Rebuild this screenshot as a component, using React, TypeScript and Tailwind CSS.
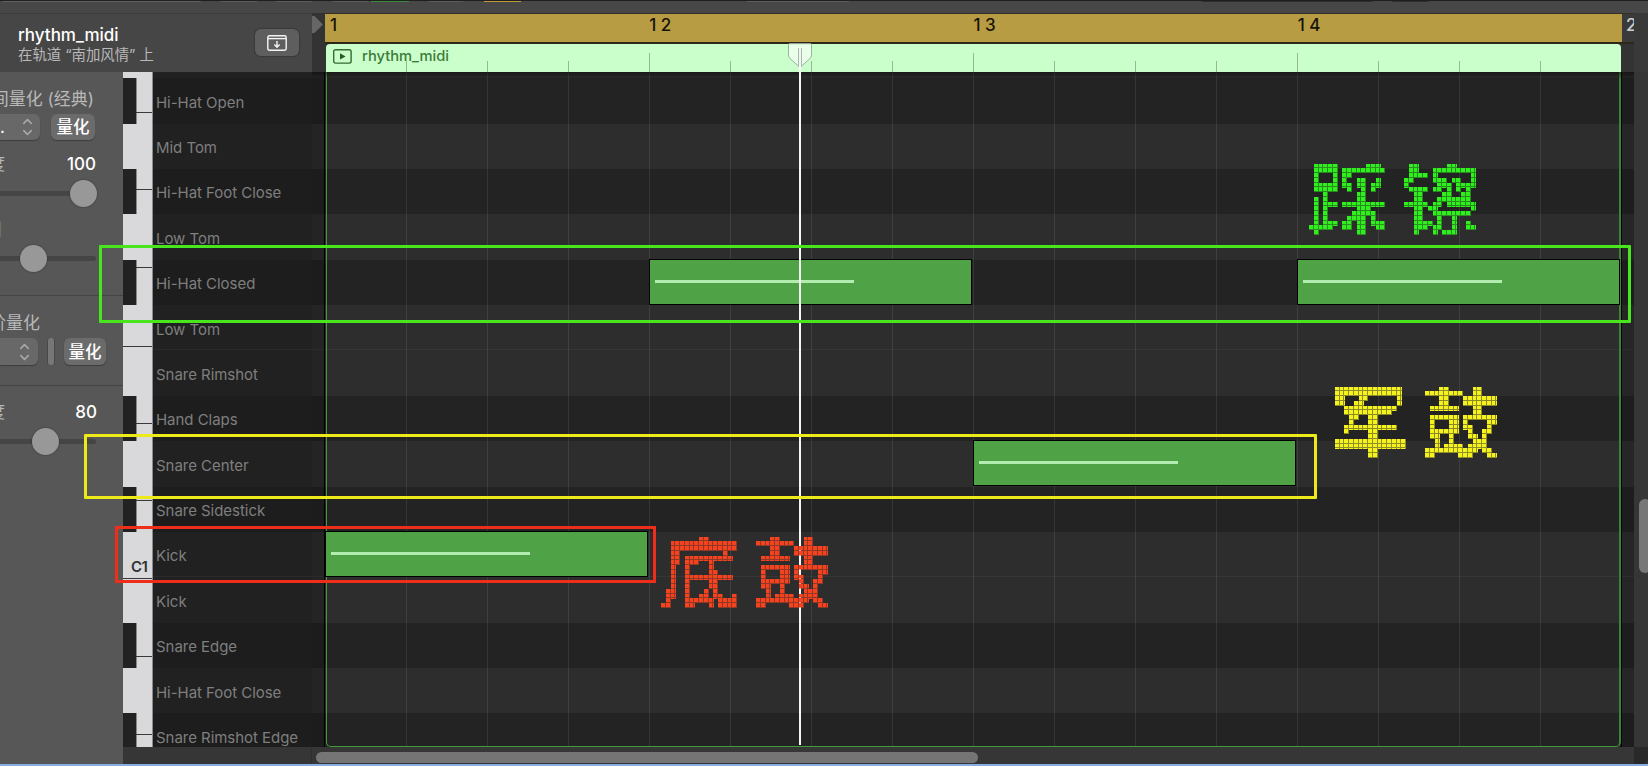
import { clsx } from 'clsx';
import { ChevronDown, ChevronUp } from 'lucide-react';

type Row = { name: string; black?: boolean; octave?: string; divider?: boolean };

const rows: Row[] = [
  { name: 'Hi-Hat Open', black: true },
  { name: 'Mid Tom' },
  { name: 'Hi-Hat Foot Close', black: true },
  { name: 'Low Tom' },
  { name: 'Hi-Hat Closed', black: true },
  { name: 'Low Tom', divider: true },
  { name: 'Snare Rimshot' },
  { name: 'Hand Claps', black: true },
  { name: 'Snare Center' },
  { name: 'Snare Sidestick', black: true },
  { name: 'Kick', octave: 'C1', divider: true },
  { name: 'Kick' },
  { name: 'Snare Edge', black: true },
  { name: 'Hi-Hat Foot Close' },
  { name: 'Snare Rimshot Edge', black: true },
];

// white key separators, measured from the top of the keyboard
const keyLines = [
  { top: 40 },
  { top: 117 },
  { top: 195 },
  { top: 274, full: true },
  { top: 351 },
  { top: 428 },
  { top: 506, full: true },
  { top: 584 },
  { top: 662 },
];

const beats = ['1', '1 2', '1 3', '1 4'];

const notes = [
  { beat: 0, row: 10 },
  { beat: 1, row: 4 },
  { beat: 2, row: 8 },
  { beat: 3, row: 4 },
];

function TopStrip() {
  return (
    <div className="relative h-[13px] shrink-0 overflow-hidden border-t border-[#1f1f1f] bg-[#474747]">
      <div className="absolute -top-[5px] left-0 h-[6px] w-[203px] rounded-b border border-[#626262] bg-[#555]" />
      <div className="absolute -top-[5px] left-[218px] h-[6px] w-[42px] rounded-b border border-[#5c5c5c]" />
      <div className="absolute -top-[5px] left-[273px] h-[6px] w-[42px] rounded-b border border-[#5c5c5c]" />
      <div className="absolute -top-[5px] left-[330px] h-[6px] w-[41px] rounded-b border border-[#5c5c5c]" />
      <div className="absolute top-0 left-[371px] h-px w-[38px] bg-[#3f8a3a]" />
      <div className="absolute -top-[5px] left-[426px] h-[6px] w-[40px] rounded-b border border-[#5c5c5c]" />
      <div className="absolute top-0 left-[484px] h-px w-[37px] bg-[#c29a3e]" />
      <div className="absolute -top-[5px] left-[744px] h-[6px] w-[108px] rounded-b border border-[#5c5c5c]" />
      <div className="absolute -top-[5px] left-[1200px] h-[6px] w-[174px] rounded-b bg-[#2d2d2d]" />
      <div className="absolute -top-[5px] left-[1390px] h-[6px] w-[40px] rounded-b bg-[#2d2d2d]" />
    </div>
  );
}

function Header() {
  return (
    <div className="flex h-[59px] shrink-0">
      <div className="flex w-[312px] items-start justify-between border-t border-[#3d3d3d] bg-[#464646] pl-[18px] pr-[13px]">
        <div className="pt-[11px]">
          <div className="text-[17px] leading-[20px] font-medium text-white">rhythm_midi</div>
          <div className="mt-px font-['Inter','Noto_Sans_CJK_SC',sans-serif] text-[14.4px] leading-[17px] whitespace-nowrap text-[#b9b9b9]">
            在轨道 “南加风情” 上
          </div>
        </div>
        <div className="mt-[15px] flex h-[27px] w-[44px] items-center justify-center rounded-md bg-[#5e5e5e] shadow-[0_0_1px_1px_rgba(0,0,0,0.18)]">
          <svg width="20" height="16" viewBox="0 0 20 16" fill="none" stroke="#f5f5f5" strokeWidth="1.4">
            <rect x="0.8" y="0.8" width="18.4" height="14.4" rx="1.6" />
            <path d="M1 3.6h18" />
            <path d="M10 6v6M7.3 9.6L10 12.2l2.7-2.6" />
          </svg>
        </div>
      </div>
      <div className="w-[13px] bg-[#333] pt-[3px]">
        <svg width="12" height="18" viewBox="0 0 12 18" fill="#666">
          <path d="M0 0h2.5L11 8.5L2.5 17H0z" />
        </svg>
      </div>
      <div className="flex w-[1309px] flex-col bg-[#333]">
        <div className="flex h-[29px] border-t border-[#363024]">
          <div className="grid w-[1297px] grid-cols-4 bg-[#b89c43]">
            {beats.map((b, i) => (
              <div
                key={b}
                className={clsx('text-[17px] leading-[22px] font-medium tracking-[-0.1px] text-[#171307]', i === 0 && 'pl-[5px]')}
              >
                {b}
              </div>
            ))}
          </div>
          <div className="w-[12px] overflow-hidden bg-[#3a3a3a] pl-[4px] text-[17px] leading-[22px] font-medium text-[#cfcfcf]">
            2
          </div>
        </div>
        <div className="h-[2px] bg-[#2c2819]" />
        <div className="relative mr-[13px] ml-px flex h-[28px] rounded-t bg-[#caffcc]">
          <div className="absolute inset-0">
            {Array.from({ length: 15 }, (_, i) => i + 1).map((i) => (
              <div
                key={i}
                className={clsx('absolute bottom-0 w-px bg-[#93b995]', i % 4 === 0 ? 'h-[19px]' : 'h-[11px]')}
                style={{ left: i * 81 - 1 }}
              />
            ))}
          </div>
          <svg className="mt-[5px] ml-[7px]" width="19" height="15" viewBox="0 0 19 15" fill="none">
            <rect x="0.7" y="0.7" width="17.4" height="13.4" rx="1.8" stroke="#336b30" strokeWidth="1.4" />
            <path d="M7 4.2v6.4l5.6-3.2z" fill="#285c25" />
          </svg>
          <span className="ml-[10px] text-[14.7px] leading-[25px] font-medium text-[#3c7a37]">rhythm_midi</span>
        </div>
      </div>
      <div className="w-[14px] bg-[#393939]" />
    </div>
  );
}

function Slider({ value, end = true }: { value: number; end?: boolean }) {
  return (
    <div className="relative h-[27px]">
      <div className={clsx('absolute top-[11px] left-0 h-[5px] rounded-r-full bg-[#454545]', end ? 'w-[96px]' : 'w-[80px]')} />
      <div
        className="absolute top-0 h-[27px] w-[27px] rounded-full bg-[#989898] shadow-[0_0_2px_rgba(0,0,0,0.4)]"
        style={{ left: value }}
      />
    </div>
  );
}

function Stepper() {
  return (
    <div className="flex flex-col text-[#a9a9a9]">
      <ChevronUp size={15} strokeWidth={2.4} className="-mb-[4px]" />
      <ChevronDown size={15} strokeWidth={2.4} />
    </div>
  );
}

function Inspector() {
  return (
    <div className="w-[123px] shrink-0 overflow-hidden bg-[#575757] text-[17px]">
      <div className="flex h-[42px] w-[94px] items-end justify-end leading-[29px] whitespace-nowrap text-[#b9b9b9]">
        时间量化 (经典)
      </div>
      <div className="flex h-[26px] gap-[11px]">
        <div className="flex w-[40px] items-center justify-between rounded-r-md bg-[#686868] pr-[5px] text-white shadow-[0_1px_1px_rgba(0,0,0,0.3)]">
          <span className="w-[10px] leading-none">.</span>
          <Stepper />
        </div>
        <div className="flex w-[44px] items-center justify-center rounded-md bg-[#6b6b6b] pt-px text-[16.5px] font-medium text-white shadow-[0_1px_1px_rgba(0,0,0,0.3)]">
          量化
        </div>
      </div>
      <div className="mt-[10px] flex h-[28px] w-[96px] items-center justify-between pt-[2px]">
        <span className="-ml-[12px] text-[#b9b9b9]">度</span>
        <span className="text-[17px] font-medium text-white">100</span>
      </div>
      <div className="mt-[2px]">
        <Slider value={69.5} end={false} />
      </div>
      <div className="mt-[10px] h-[28px]">
        <span className="-ml-[15px] text-[#777]">围</span>
      </div>
      <Slider value={20} />
      <div className="mt-[23px] h-px bg-[#444]" />
      <div className="mt-[13px] -ml-[46px] flex h-[29px] w-[86px] items-center justify-end whitespace-nowrap text-[#b9b9b9]">高阶量化</div>
      <div className="flex h-[27px]">
        <div className="flex w-[38px] items-center justify-end rounded-r-md bg-[#686868] pr-[6px] shadow-[0_1px_1px_rgba(0,0,0,0.3)]">
          <Stepper />
        </div>
        <div className="ml-[9px] w-[8px] rounded-[3px] border-x border-[#484848] bg-[#777]" />
        <div className="ml-[9px] flex w-[42px] items-center justify-center rounded-md bg-[#6b6b6b] pt-px text-[16.5px] font-medium text-white shadow-[0_1px_1px_rgba(0,0,0,0.3)]">
          量化
        </div>
      </div>
      <div className="mt-[20px] h-px bg-[#444]" />
      <div className="mt-[12px] flex h-[28px] w-[97px] items-center justify-between pt-[2px]">
        <span className="-ml-[12px] text-[#b9b9b9]">度</span>
        <span className="text-[17px] font-medium text-white">80</span>
      </div>
      <div className="mt-[2px]">
        <Slider value={32} />
      </div>
    </div>
  );
}

function Keyboard() {
  return (
    <div className="relative flex h-[675px] w-[30px] shrink-0 flex-col overflow-hidden border-r border-[#8c8c8e] bg-[#d9d9dc] pt-[6.2px]">
      {rows.map((row, i) => (
        <div key={i} className="flex h-[45.38px] shrink-0 items-end">
          {row.black && <div className="h-full w-[14px] border-r border-[#888] bg-[#222]" />}
          {row.octave && (
            <span className="ml-[8px] text-[15px] leading-[20px] font-semibold tracking-[-0.5px] text-[#333]">{row.octave}</span>
          )}
        </div>
      ))}
      {keyLines.map((line) => (
        <div
          key={line.top}
          className={clsx('absolute right-0 h-px bg-[#39393b]', line.full ? 'w-full' : 'w-[16px]')}
          style={{ top: line.top }}
        />
      ))}
    </div>
  );
}

function Labels() {
  return (
    <div className="flex h-[675px] w-[159px] shrink-0 flex-col overflow-hidden bg-[#212121] pt-[6.2px]">
      {rows.map((row, i) => (
        <div
          key={i}
          className={clsx(
            'flex h-[45.38px] shrink-0 items-center border-b pt-[5px] pl-[3px] text-[15px] tracking-[-0.04px] whitespace-nowrap text-[#7f7f7f]',
            row.black ? 'border-[#1d1d1d] bg-[#1d1d1d]' : 'bg-[#212121]',
            !row.black && (row.divider ? 'border-[#2b2b2b]' : 'border-[#212121]'),
          )}
        >
          {row.name}
        </div>
      ))}
    </div>
  );
}

function PianoRoll() {
  return (
    <div className="relative flex h-[675px] w-[1322px] shrink-0 flex-col overflow-hidden bg-[#2d2d2d] pt-[6.2px]">
      {rows.map((row, i) => (
        <div
          key={i}
          className={clsx(
            'h-[45.38px] shrink-0 border-b',
            row.black ? 'border-[#232323] bg-[#232323]' : 'bg-[#2d2d2d]',
            !row.black && (row.divider ? 'border-[#363636]' : 'border-[#2d2d2d]'),
          )}
        />
      ))}
      <div className="absolute inset-y-0 left-0 w-[13px] border-r border-black bg-black/20" />
      <div className="absolute inset-y-0 right-0 w-[12px] bg-black/15" />
      {Array.from({ length: 15 }, (_, i) => i + 1).map((i) => (
        <div key={i} className="absolute inset-y-0 w-px bg-white/9" style={{ left: 13 + i * 81 }} />
      ))}
      <div className="absolute top-0 bottom-0 left-[14px] w-[1295px] rounded-b-[5px] border-x border-b border-[#3f9d38] border-r-2 border-r-[#3c8238]" />
      <div className="absolute inset-y-0 left-[1309px] w-px bg-black" />
      {notes.map((n) => (
        <div
          key={n.beat}
          className="absolute h-[46px] w-[323px] border border-black bg-[#4fa245] pt-[20px] pl-[5px]"
          style={{ left: 13 + n.beat * 324, top: 5.4 + n.row * 45.34 }}
        >
          <div className="h-[3px] w-[199px] bg-[#b2ecae]" />
        </div>
      ))}
      <div className="absolute inset-x-0 top-0 h-[7px] bg-gradient-to-b from-black/45 to-transparent" />
    </div>
  );
}

function Playhead() {
  return (
    <div className="absolute top-[43px] left-[787px] w-[26px]">
      <svg width="26" height="26" viewBox="0 0 26 26">
        <path
          d="M1.500 1.500Q1.500 .7 2.500 .7H23.500Q24.500 .7 24.500 1.500V12Q24.500 14 23 15.500L13 24.500L3 15.500Q1.500 14 1.500 12Z"
          fill="#e9ffea"
          stroke="#98b699"
        />
        <path d="M11.500 5v18M14.500 5v18" stroke="#a9bbaa" />
      </svg>
      <div className="absolute top-[5px] left-[12px] h-[697px] w-[2px] bg-[#f5f5f5]" />
    </div>
  );
}

const cellCenters = [2, 7, 12, 16];
const cellGaps = [4, 9, 13, 18];

// one row/column of thin lines repeated every 19px, four cells to a tile
function LineTile({ name, offsets }: { name: string; offsets: number[] }) {
  return (
    <>
      {offsets.map((o, i) => (
        <feFlood key={`v${o}`} x={o} y="0" width="1" height="19" floodColor="#000" result={`${name}V${i}`} />
      ))}
      <feMerge x="0" y="0" width="19" height="19" result={`${name}VAll`}>
        {offsets.map((o, i) => (
          <feMergeNode key={o} in={`${name}V${i}`} />
        ))}
      </feMerge>
      <feTile in={`${name}VAll`} x="0" y="0" width="220" height="100" result={`${name}V`} />
      {offsets.map((o, i) => (
        <feFlood key={`h${o}`} x="0" y={o} width="19" height="1" floodColor="#000" result={`${name}H${i}`} />
      ))}
      <feMerge x="0" y="0" width="19" height="19" result={`${name}HAll`}>
        {offsets.map((o, i) => (
          <feMergeNode key={o} in={`${name}H${i}`} />
        ))}
      </feMerge>
      <feTile in={`${name}HAll`} x="0" y="0" width="220" height="100" result={`${name}H`} />
    </>
  );
}

// turns the marker lettering into square cells
function CellFilter() {
  return (
    <svg className="absolute h-0 w-0" aria-hidden="true">
      <filter id="cells" filterUnits="userSpaceOnUse" primitiveUnits="userSpaceOnUse" x="0" y="0" width="220" height="100" colorInterpolationFilters="sRGB">
        <LineTile name="dot" offsets={cellCenters} />
        <feComposite in="dotV" in2="dotH" operator="in" x="0" y="0" width="220" height="100" result="dots" />
        <feComponentTransfer in="SourceGraphic" result="solid">
          <feFuncA type="discrete" tableValues="0 1" />
        </feComponentTransfer>
        <feComposite in="solid" in2="dots" operator="in" />
        <feMorphology operator="dilate" radius="2" result="blocks" />
        <LineTile name="gap" offsets={cellGaps} />
        <feMerge x="0" y="0" width="220" height="100" result="gapLines">
          <feMergeNode in="gapV" />
          <feMergeNode in="gapH" />
        </feMerge>
        <feComposite in="blocks" in2="gapLines" operator="out" result="tiles" />
        <feComponentTransfer in="blocks" result="faded">
          <feFuncA type="linear" slope="0.5" />
        </feComponentTransfer>
        <feMerge>
          <feMergeNode in="faded" />
          <feMergeNode in="tiles" />
        </feMerge>
      </filter>
    </svg>
  );
}

function Marker({ text, className }: { text: string; className: string }) {
  return (
    <div
      className={clsx(
        "absolute h-[100px] w-[220px] font-['Noto_Sans_CJK_SC',sans-serif] text-[79px] leading-[84px] font-medium tracking-[13px] whitespace-nowrap [filter:url(#cells)]",
        className,
      )}
    >
      {text}
    </div>
  );
}

export default function App() {
  return (
    <div className="relative flex h-[766px] w-[1648px] flex-col overflow-hidden bg-[#575757] font-['Inter','Noto_Sans_CJK_SC',sans-serif]">
      <TopStrip />
      <Header />
      <div className="flex h-[692px] shrink-0">
        <Inspector />
        <div className="flex w-[1525px] flex-col">
          <div className="flex h-[675px]">
            <Keyboard />
            <Labels />
            <PianoRoll />
            <div className="flex-1 overflow-hidden bg-[#363636] pt-[427px] pl-[5px]">
              <div className="h-[74px] w-[12px] rounded-full bg-[#777]" />
            </div>
          </div>
          <div className="flex h-[17px] bg-[#363636]">
            <div className="w-[189px] border-r border-[#2e2e2e]" />
            <div className="mt-[5px] ml-[4px] h-[11px] w-[662px] rounded-full bg-[#757575]" />
            <div className="ml-auto w-[14px] rounded-br-[5px] bg-[#292929]" />
          </div>
        </div>
      </div>
      <div className="h-[2px] shrink-0 bg-[#86aee2]" />

      <Playhead />

      <div className="absolute top-[245px] left-[99px] h-[78px] w-[1532px] rounded-[1px] border-[3px] border-[#48e61d]" />
      <div className="absolute top-[434px] left-[84px] h-[65px] w-[1233px] rounded-[1px] border-[3px] border-[#eeea1a]" />
      <div className="absolute top-[526px] left-[115px] h-[57px] w-[541px] border-[3px] border-[#ee2e1b]" />

      <CellFilter />
      <Marker text="踩镲" className="top-[154px] left-[1309px] text-[#2ff01c]" />
      <Marker text="军鼓" className="top-[377px] left-[1330px] text-[#f5f21e]" />
      <Marker text="底鼓" className="top-[527px] left-[661px] text-[#f5431f]" />
    </div>
  );
}
